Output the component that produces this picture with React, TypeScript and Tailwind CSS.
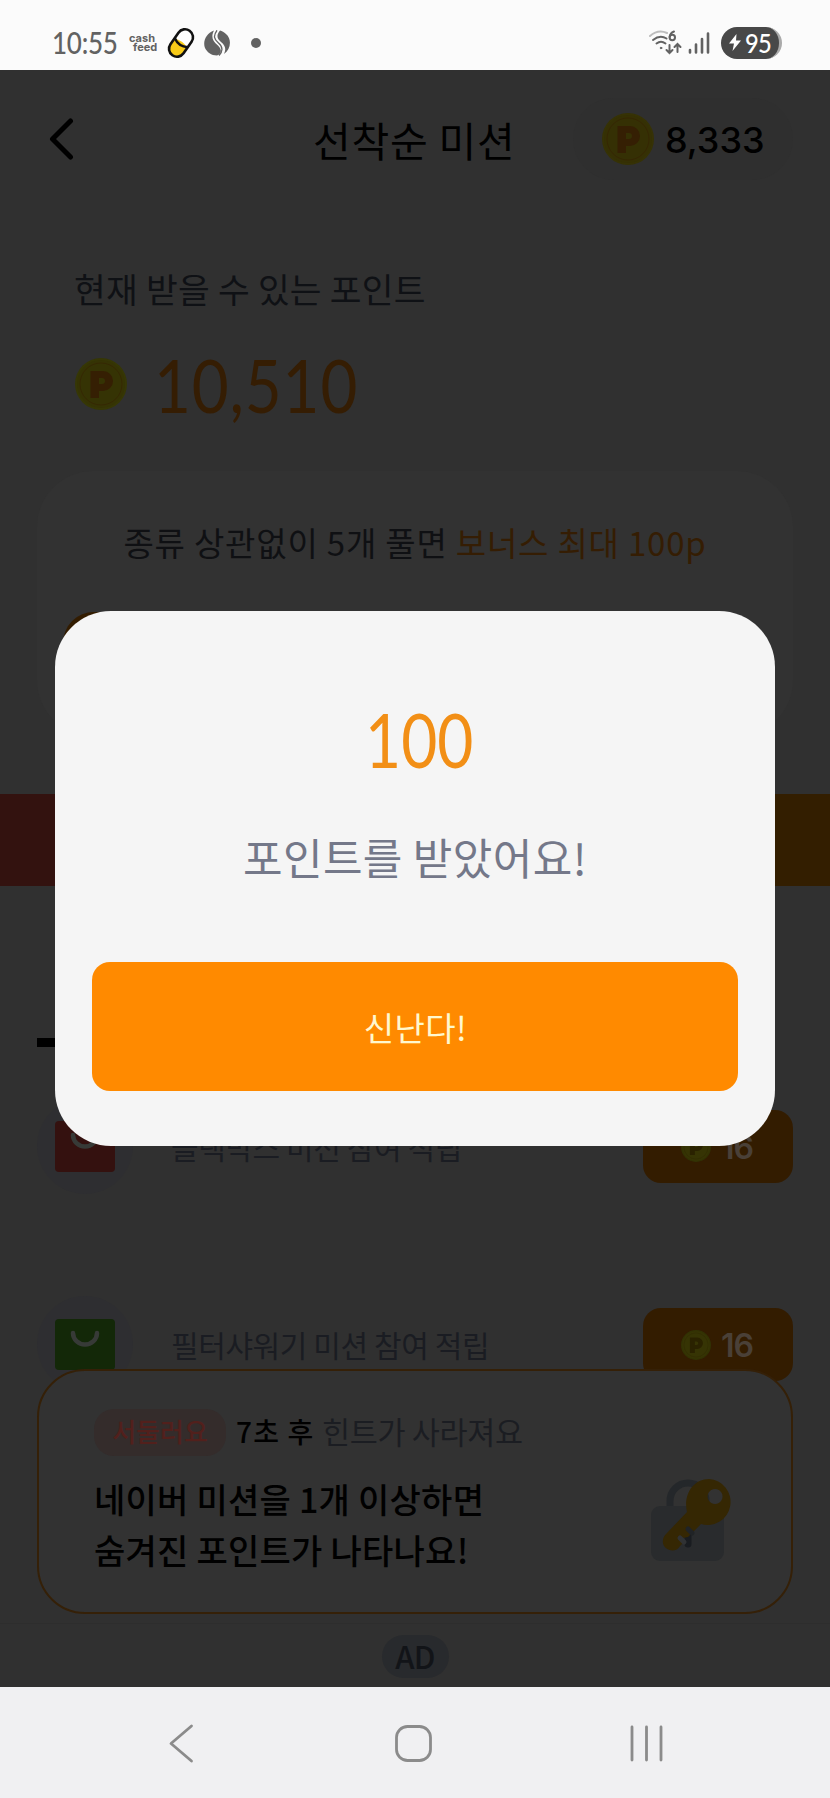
import React from "react";

const KR = "font-['Noto_Sans_CJK_KR',sans-serif]";

function Coin({ className, body, ring, mark }: { className: string; body: string; ring: string; mark: string }) {
  return (
    <svg viewBox="0 0 52 52" className={className}>
      <circle cx="26" cy="26" r="26" fill={ring} />
      <circle cx="26" cy="26" r="24" fill={body} />
      <circle cx="26" cy="26" r="21" fill="none" stroke={mark} strokeOpacity="0.55" strokeWidth="1" />
      <path fill={mark} fillRule="evenodd" d="M15.500 13H28a9.500 9.500 0 0 1 0 20h-4v7h-8.500zM24 20v6h3a3 3 0 0 0 0-6z" />
    </svg>
  );
}

function StatusBar() {
  return (
    <header className="flex h-[70px] shrink-0 items-center bg-[#fbfbfb] pt-[15px] pl-[52px] pr-[48px] text-[#626262]">
      <span className="w-[70px] origin-left scale-x-[0.84] whitespace-nowrap font-['Lato'] text-[31px] leading-none font-medium tracking-[-0.3px]">10:55</span>
      <div className="ml-[7px] w-[32px] font-['Inter'] text-[11px] leading-[9px] font-bold">
        <div>cash</div>
        <div className="pl-[4px]">feed</div>
      </div>
      <svg viewBox="0 0 30 32" className="ml-[5px] h-[32px] w-[30px]">
        <g transform="rotate(35 15 16)">
          <rect x="7" y="1" width="16" height="30" rx="8" fill="#fff" />
          <path d="M7 16.500q8-4 16 0V23a8 8 0 0 1-16 0z" fill="#f8cb18" />
          <path d="M7 15.500q8 5 16 0" fill="none" stroke="#111" strokeWidth="2.400" />
          <rect x="7" y="1" width="16" height="30" rx="8" fill="none" stroke="#111" strokeWidth="2.600" />
        </g>
      </svg>
      <svg viewBox="0 0 26 26" className="ml-[8px] h-[26px] w-[26px]">
        <path d="M10 .5C2 3-1.500 12 1 18c2 4 6 7.500 12 7.500 5-2 5-6 1-10C8 11 7 6 10 .5z" fill="#626262" />
        <path d="M13 .3C9 6 10 9 14.500 13c5 4 4 9 .5 12.500" fill="none" stroke="#626262" strokeWidth="1.300" />
        <path d="M16 .5C12 5 13 9 17 12c5 4 5 8 3 12C27 19 28 9 22 4c-2-2-4-3-6-3.500z" fill="#626262" />
      </svg>
      <span className="ml-[21px] size-[10px] rounded-full bg-[#626262]" />
      <div className="ml-auto flex items-center">
        <svg viewBox="0 0 34 26" className="h-[26px] w-[34px]" fill="none" strokeLinecap="round" stroke="#626262" strokeWidth="2">
          <path d="M2 6Q10-1 19 3" stroke="#bdbdbd" />
          <path d="M5 10Q12 4.500 18.500 8.500M8.500 13.500Q13 10 17.500 13.500" />
          <circle cx="13" cy="18" r=".8" fill="#626262" strokeWidth="1" />
          <path d="M26 1.500Q22 3 21.700 7" />
          <circle cx="24.300" cy="7.500" r="2.700" />
          <path d="M21.500 15v8m-3-3 3 3 3-3M29.500 22v-8m-3 3 3-3 3 3" />
        </svg>
        <svg viewBox="0 0 22 24" className="ml-[6px] h-[24px] w-[22px]" stroke="#626262" strokeWidth="2.600" strokeLinecap="round">
          <path d="M2 19v2.500M8 13.500v8M14 8v13.500M20 2.500v19" />
        </svg>
        <div className="ml-[11px] flex h-[32px] w-[61px] items-center rounded-full border-r-[3px] border-[#aaaaaa] bg-[#484848] pl-[8px] text-white">
          <svg viewBox="0 0 12 17" className="h-[17px] w-[12px]"><path d="M7.500 0 0 9.500h5L3.500 17 12 6.500H7z" fill="#fff" /></svg>
          <span className="ml-[4px] origin-left scale-x-[0.88] font-['Lato'] text-[27px] leading-none font-medium tracking-[-1px]">95</span>
        </div>
      </div>
    </header>
  );
}

function RewardButton() {
  return (
    <div className="flex h-[73px] w-[150px] items-center rounded-[18px] bg-[#331c00] pt-[2px] pl-[38px]">
      <Coin className="size-[30px]" body="#363404" ring="#323204" mark="#2a2200" />
      <span className="mt-[2px] ml-[10px] font-['Inter'] text-[32px] leading-none font-semibold tracking-[-1px] text-[#4a4037]">16</span>
    </div>
  );
}

function MissionRow({ label, tint }: { label: string; tint: string }) {
  return (
    <div className="flex h-[96px] items-center">
      <div className="flex size-[96px] shrink-0 items-center justify-center rounded-full bg-[#2e2e31]">
        <svg viewBox="0 0 60 51" className="h-[51px] w-[60px]">
          <rect width="60" height="51" rx="4" fill={tint} />
          <path d="M18 14a12 11.500 0 0 0 24 0" fill="none" stroke="#373a37" strokeWidth="4.500" strokeLinecap="round" />
        </svg>
      </div>
      <span className={`${KR} ml-[38px] flex-1 whitespace-nowrap text-[30px] leading-none tracking-[-0.4px] text-[#1a1c22]`}>{label}</span>
      <RewardButton />
    </div>
  );
}

function HintCard() {
  return (
    <div className="absolute top-[1369px] left-[37px] flex h-[245px] w-[756px] items-center rounded-[48px] border-[2.500px] border-[#352007] bg-[#323232] pl-[55px]">
      <div className={`${KR} flex flex-1 flex-col whitespace-nowrap`}>
        <div className="flex h-[47px] items-center">
          <span className="flex h-[47px] w-[132px] items-center justify-center rounded-[20px] bg-[#342c2b] pb-[3px] text-[26px] leading-none font-medium text-[#52201c]">서둘러요</span>
          <span className="ml-[10px] w-[86px] pb-[2px] text-[28px] leading-none font-medium tracking-[1.2px] text-black">7초 후</span>
          <span className="pb-[2px] text-[30.500px] leading-none tracking-[-0.300px] text-[#1b1d22]">힌트가 사라져요</span>
        </div>
        <p className="mt-[17px] text-[34px] leading-[51px] font-medium tracking-[0.25px] text-black">
          네이버 미션을 1개 이상하면
          <br />
          숨겨진 포인트가 나타나요!
        </p>
      </div>
      <svg viewBox="0 0 82 83" className="mt-[58px] mr-[58px] h-[83px] w-[82px]">
        <path d="M19 34V22a18 18 0 0 1 36 0v12" fill="none" stroke="#24272a" strokeWidth="7" />
        <rect x="0" y="27" width="73" height="55" rx="9" fill="#292b2d" />
        <path d="M37 50v15" stroke="#191c20" strokeWidth="7" strokeLinecap="round" />
        <path fill="#352703" fillRule="evenodd" d="M58 0a23 23 0 1 1-8 45l-13 13-5 1-1 6-2 2c-5 9-19 3-17-6 0-3 2-5 4-7l20-21C32 16 42 0 58 0zm6 10a7.500 7.500 0 1 0 .1 0z" />
        <path d="M37 50l4 4" stroke="#202326" strokeWidth="5" strokeLinecap="round" />
        <path d="M29 59l4 4" stroke="#303234" strokeWidth="5" strokeLinecap="round" />
      </svg>
    </div>
  );
}

function RewardDialog() {
  return (
    <div role="dialog" className="absolute top-[611px] left-[55px] flex h-[535px] w-[720px] flex-col items-center rounded-[56px] bg-[#f5f5f5]">
      <strong className="mt-[91px] ml-[8px] h-[74px] origin-center scale-x-[0.83] font-['Lato'] text-[75px] leading-[74px] font-normal text-[#f28f16]">100</strong>
      <p className={`${KR} mt-[48px] h-[64px] whitespace-nowrap text-[43px] leading-[64px] tracking-[0.4px] text-[#747889]`}>포인트를 받았어요!</p>
      <button className={`${KR} mt-[74px] flex h-[129px] w-[646px] items-center justify-center rounded-[18px] bg-[#ff8a00] pt-[2px] pl-px text-[33px] leading-none tracking-[0.4px] text-[#fff8cf]`}>신난다!</button>
    </div>
  );
}

export default function App() {
  return (
    <div className="relative flex h-[1798px] w-[830px] flex-col overflow-hidden bg-[#303030]">
      <StatusBar />
      <main className="flex min-h-0 flex-1 flex-col">
        <div className="flex h-[138px] shrink-0 items-center pr-[37px] pl-[49px]">
          <svg viewBox="0 0 25 42" className="h-[42px] w-[25px]" fill="none" stroke="#000" strokeWidth="5" strokeLinecap="round" strokeLinejoin="round"><path d="M21.500 3 3.500 21l18 18" /></svg>
          <h1 className={`${KR} ml-[239px] w-[260px] whitespace-nowrap text-[41px] leading-none tracking-[0.8px] text-black`}>선착순 미션</h1>
          <div className="flex h-[82px] w-[220px] items-center rounded-full bg-[#2f2f2f] pl-[29px]">
            <Coin className="size-[52px]" body="#353004" ring="#363205" mark="#351f03" />
            <span className="mt-[2px] ml-[11px] font-['Inter'] text-[36px] leading-none font-[450] text-black">8,333</span>
          </div>
        </div>
        <section className="flex h-[263px] shrink-0 flex-col pt-[55px] pl-[74px]">
          <p className={`${KR} h-[50px] whitespace-nowrap text-[34.500px] leading-[50px] tracking-[0.25px] text-[#0f1115]`}>현재 받을 수 있는 포인트</p>
          <div className="mt-[33px] flex h-[76px] items-center pl-px">
            <Coin className="size-[52px]" body="#353304" ring="#363705" mark="#351f03" />
            <span className="mt-[2px] ml-[27px] origin-left scale-x-[0.86] font-['Lato'] text-[74px] leading-[74px] tracking-[1px] text-[#351d03]">10,510</span>
          </div>
        </section>
        <section className="mx-[37px] flex h-[265px] shrink-0 flex-col rounded-[56px] bg-[#323232] px-[26px] pt-[44px]">
          <p className={`${KR} h-[54px] text-center whitespace-nowrap text-[33px] leading-[54px] tracking-[0.8px] text-[#0f1013]`}>
            종류 상관없이 5개 풀면 <span className="text-[#351d03]">보너스 최대 100p</span>
          </p>
          <div className="mt-[43px] h-[62px] w-[350px] rounded-[31px] bg-[#331c00]" />
        </section>
        <div className="mt-[58px] flex h-[92px] shrink-0 justify-between">
          <div className="w-[415px] bg-[#33120f]" />
          <div className="w-[415px] bg-[#331e00]" />
        </div>
        <div className="mt-[152px] h-[9px] w-[300px] shrink-0 translate-x-[37px] bg-black" />
        <section className="mt-[51px] flex shrink-0 flex-col gap-[102px] px-[37px]">
          <MissionRow label="블랙박스 미션 참여 적립" tint="#34110f" />
          <MissionRow label="필터샤워기 미션 참여 적립" tint="#132808" />
        </section>
        <div className="mt-auto flex h-[64px] shrink-0 items-start justify-center border-t border-[#2d2d2d] pt-[11px]">
          <span className={`${KR} flex h-[43px] w-[67px] items-center justify-center rounded-full bg-[#282a2d] pb-[2px] text-[31px] leading-none font-medium tracking-[-0.7px] text-[#121418]`}>AD</span>
        </div>
      </main>
      <nav className="flex h-[111px] shrink-0 items-start bg-[#f0f0f2] pt-[37px] pl-[168px]">
        <svg viewBox="0 0 496 40" className="h-[40px] w-[496px]" fill="none" stroke="#8b8b8b" strokeWidth="2.800" strokeLinecap="round" strokeLinejoin="round">
          <path d="M23.500 2 3 19.500 23.500 37" />
          <rect x="228.500" y="2.500" width="34" height="34" rx="11" />
          <path d="M464 3v33M478.500 3v33M493 3v33" />
        </svg>
      </nav>
      <HintCard />
      <RewardDialog />
    </div>
  );
}
